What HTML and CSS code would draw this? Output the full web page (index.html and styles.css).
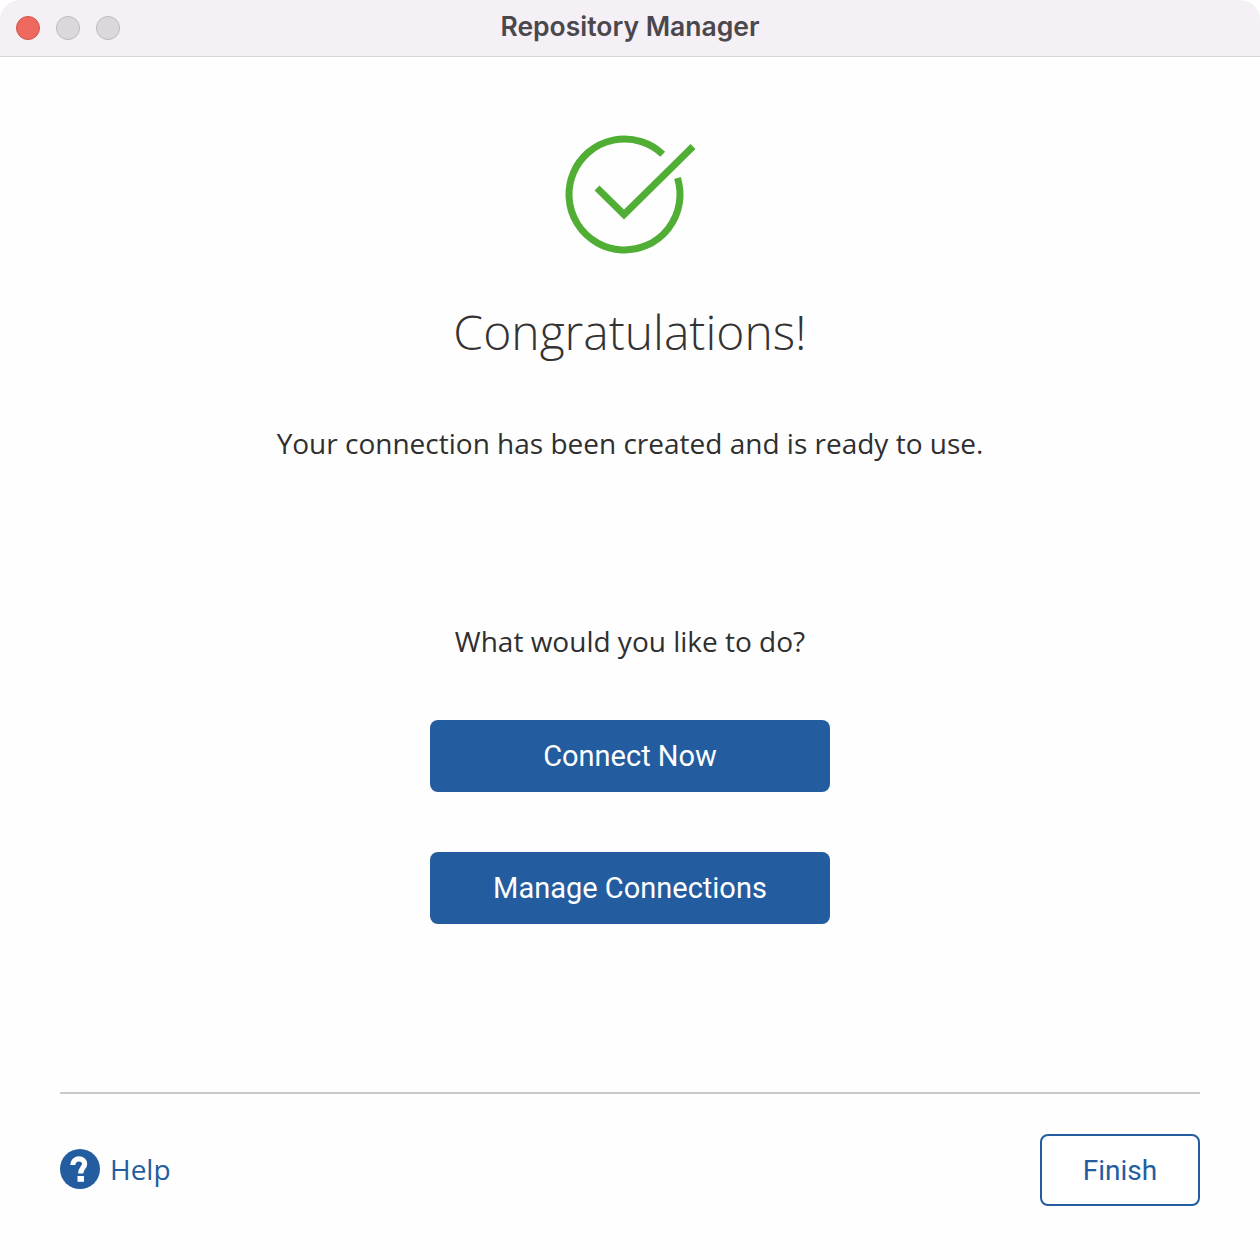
FILE: index.html
```html
<!doctype html>
<html lang="en">
  <head>
    <meta charset="UTF-8" />
    <title>Repository Manager</title>
    <link rel="stylesheet" href="styles.css">
  </head>
  <body>
    <div class="window">
      <div class="titlebar">
        <div class="traffic-lights">
          <span class="light light-close"></span>
          <span class="light"></span>
          <span class="light"></span>
        </div>
        <div class="window-title">Repository Manager</div>
      </div>

      <div class="content">
        <svg class="success-icon" width="150" height="140" viewBox="0 0 150 140">
          <path d="M122.5 53 A55.5 55.5 0 1 1 107.7 29.2" fill="none" stroke="#50ae35" stroke-width="7" />
          <path d="M42 63 L69 89.5 L138 21.5" fill="none" stroke="#50ae35" stroke-width="7" />
        </svg>
        <h1 class="heading">Congratulations!</h1>
        <p class="ready-text">Your connection has been created and is ready to use.</p>
        <p class="question">What would you like to do?</p>
        <button class="primary-btn connect-btn">Connect Now</button>
        <button class="primary-btn">Manage Connections</button>
      </div>

      <div class="footer">
        <div class="help">
          <svg class="help-icon" width="40" height="40" viewBox="0 0 40 40">
            <circle cx="20" cy="20" r="20" fill="#235da0" />
            <path d="M12.8 16 C12.8 12 16 9.8 19 9.8 C22 9.8 24.6 12 24.6 15 C24.6 18.5 20.7 19 20.7 24.5" fill="none" stroke="#fff" stroke-width="5.2" />
            <rect x="17.5" y="27" width="6.5" height="5.8" fill="#fff" />
          </svg>
          <span class="help-label">Help</span>
        </div>
        <button class="finish-btn">Finish</button>
      </div>
    </div>
  </body>
</html>
```

FILE: styles.css
```css
body {
  margin: 0;
  padding: 0;
  background-color: #fefefe;
}

.window {
  width: 1260px;
  height: 1260px;
  display: flex;
  flex-direction: column;
  font-family: "Open Sans", sans-serif;
  color: #2f2f2f;
}

/* Title bar */
.titlebar {
  height: 56px;
  flex-shrink: 0;
  background-color: #f5eff6;
  border-bottom: 1px solid #d8d6d9;
  border-radius: 20px 20px 0 0;
  display: flex;
  align-items: center;
  justify-content: center;
  position: relative;
}

.traffic-lights {
  position: absolute;
  left: 16px;
  top: 16px;
  display: flex;
  gap: 16px;
}

.light {
  width: 24px;
  height: 24px;
  box-sizing: border-box;
  border-radius: 50%;
  background-color: #dcd7dd;
  border: 1px solid #bdb8be;
}

.light-close {
  background-color: #ee6a5f;
  border-color: #d4534a;
}

.window-title {
  font-family: Inter, sans-serif;
  font-size: 26.5px;
  font-weight: 600;
  color: #4a484d;
  margin-top: -4px;
}

/* Main content */
.content {
  flex-grow: 1;
  display: flex;
  flex-direction: column;
  align-items: center;
}

.success-icon {
  margin-top: 68px;
  flex-shrink: 0;
  display: block;
}

.heading {
  margin: 34px 0 0;
  font-size: 48px;
  line-height: 66px;
  font-weight: 300;
  color: #333;
}

.ready-text {
  margin: 59px 0 0;
  font-size: 28px;
  line-height: 38px;
}

.question {
  margin: 160px 0 0;
  font-size: 28px;
  line-height: 38px;
}

.primary-btn {
  width: 400px;
  height: 72px;
  flex-shrink: 0;
  background-color: #235da0;
  color: white;
  border: none;
  border-radius: 8px;
  font-family: Roboto, sans-serif;
  font-size: 29px;
  cursor: pointer;
}

.connect-btn {
  margin-top: 60px;
  margin-bottom: 60px;
}

/* Footer */
.footer {
  margin: 0 60px 54px;
  height: 114px;
  box-sizing: border-box;
  border-top: 2px solid #cacaca;
  display: flex;
  align-items: flex-start;
  justify-content: space-between;
  padding-top: 40px;
}

.help {
  display: flex;
  align-items: center;
  gap: 10px;
  height: 70px;
}

.help-label {
  font-size: 28px;
  color: #235da0;
}

.finish-btn {
  width: 160px;
  height: 72px;
  box-sizing: border-box;
  background-color: #fff;
  color: #235da0;
  border: 2px solid #235da0;
  border-radius: 8px;
  font-family: Roboto, sans-serif;
  font-size: 28px;
  cursor: pointer;
}
```
